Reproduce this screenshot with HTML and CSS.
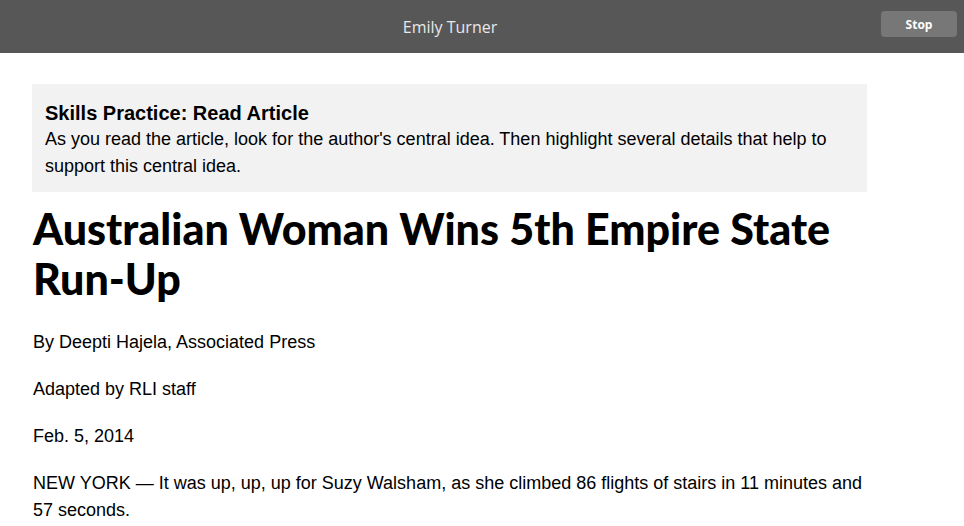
FILE: index.html
```html
<!DOCTYPE html>
<html lang="en">

<head>
    <meta charset="UTF-8">
    <meta name="viewport" content="width=device-width, initial-scale=1.0">
    <link rel="stylesheet" href="styles.css">
    <title>Read Article</title>
</head>

<body>
    <header class="topbar">
        <div class="student">Emily Turner</div>
        <button class="stop">Stop</button>
    </header>

    <main class="page">
        <section class="prompt">
            <h2>Skills Practice: Read Article</h2>
            <p>As you read the article, look for the author's central idea. Then highlight several details that help to support this central idea.</p>
        </section>

        <article class="article">
            <h1>Australian Woman Wins 5th Empire State Run-Up</h1>
            <p>By Deepti Hajela, Associated Press</p>
            <p>Adapted by RLI staff</p>
            <p>Feb. 5, 2014</p>
            <p>NEW YORK — It was up, up, up for Suzy Walsham, as she climbed 86 flights of stairs in 11 minutes and 57 seconds.</p>
        </article>
    </main>
</body>

</html>
```

FILE: styles.css
```css
* {
    margin: 0;
    padding: 0;
    box-sizing: border-box;
}

body {
    font-family: "Liberation Sans", Arial, sans-serif;
    color: #000;
    background: #fff;
}

.topbar {
    height: 53px;
    background-color: #575757;
    display: flex;
    align-items: center;
    justify-content: center;
    position: relative;
}

.student {
    font-family: "Open Sans", sans-serif;
    font-size: 16px;
    color: #e8e8e8;
    margin-right: 64px;
}

.stop {
    position: absolute;
    top: 11px;
    right: 7px;
    width: 76px;
    height: 26px;
    border: none;
    border-radius: 4px;
    background-color: #777;
    color: #fff;
    font-family: "Open Sans", sans-serif;
    font-weight: bold;
    font-size: 12px;
}

.page {
    padding: 31px 97px 0 32px;
}

.prompt {
    background-color: #f2f2f2;
    padding: 16px 13px 12px;
}

.prompt h2 {
    font-size: 20px;
    line-height: 26px;
}

.prompt p {
    font-size: 18px;
    line-height: 27px;
}

.article {
    padding: 0 1px;
}

.article h1 {
    font-family: "Lato", sans-serif;
    font-weight: 900;
    font-size: 43px;
    line-height: 50px;
    margin: 12px 0 25px;
}

.article p {
    font-size: 18px;
    line-height: 27px;
    margin-bottom: 20px;
}
```
